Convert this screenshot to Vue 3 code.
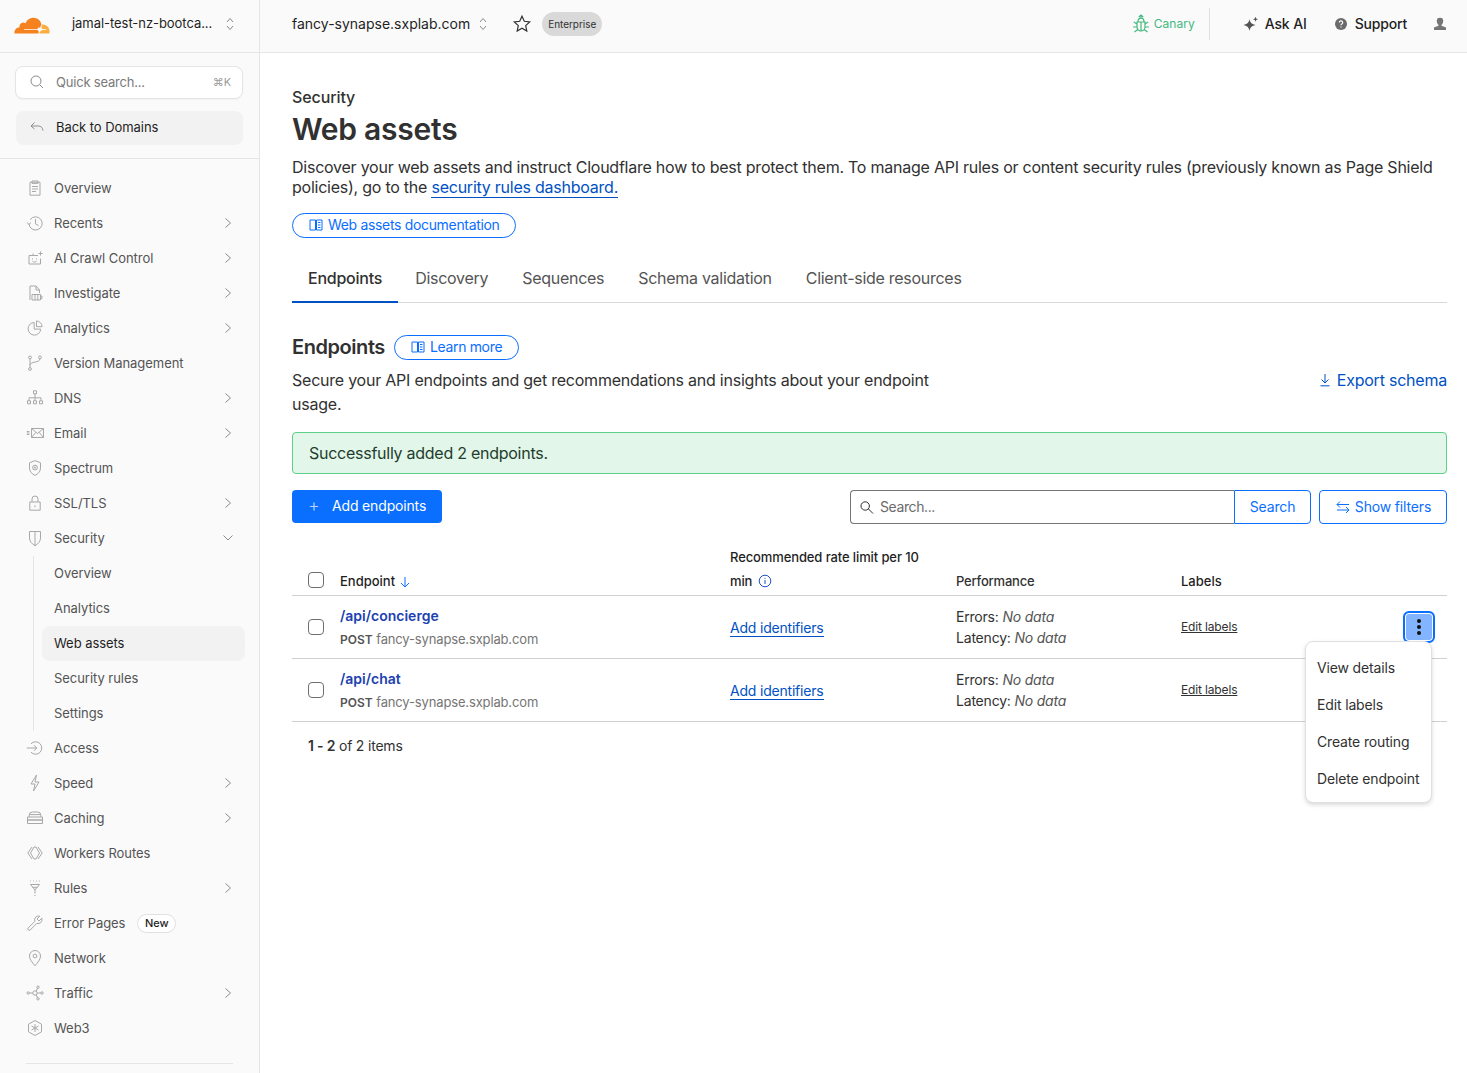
<script setup>
const ring = (cx, cy, r) => `M${cx - r} ${cy}a${r} ${r} 0 1 0 ${2 * r} 0a${r} ${r} 0 1 0 ${-2 * r} 0`
const icons = {
  overview: ['M4 3.200h10v13H4z', 'M6 2h6v2.400H6z', 'M6 7.500h6', 'M6 10h6', 'M6 12.500h4'],
  recents: ['M4.200 5.600A6.600 6.600 0 1 1 3 10', 'M1 8.600l2 1.800 2-1.800', 'M9.500 5v4.800l3 1.800'],
  ai: ['M3 6.500h9', 'M3 6.500v8.500h11.500V9.500', 'M7 6.500V4.500', 'M6.500 9.500v1', 'M10.500 9.500v1', 'M6.500 12.400c1 .8 3 .8 4 0', 'M14.500 2.500v4', 'M12.500 4.500h4'],
  investigate: ['M4 16V2h6l3.500 4v3', 'M10 2v4h3.500', 'M6 10.500h8.500V16H6z', 'M9 10.500V16', 'M11.800 10.500V16', 'M14.500 12H16v2.500h-1.500'],
  analytics: ['M8.200 3.500a6.300 6.300 0 1 0 6.500 6.600H8.200z', 'M10.500 1.900a6 6 0 0 1 5.600 5.800h-5.600z'],
  version: [ring(4, 3.4, 1.4), ring(4, 15, 1.4), ring(14, 3.4, 1.4), 'M4 4.800v8.800', 'M14 4.800c0 4.200-10 2.400-10 6.400'],
  dns: ['M7.500 1.800h3v3h-3z', 'M9 4.800v4', 'M3 8.800h12', 'M3 8.800v3', 'M9 8.800v3', 'M15 8.800v3', 'M1.500 11.800h3v3h-3z', 'M7.500 11.800h3v3h-3z', 'M13.500 11.800h3v3h-3z'],
  email: ['M5.500 4.500h12v9h-12z', 'M5.500 4.500l6 5 6-5', 'M5.500 13.500l4.400-5.200', 'M17.500 13.500l-4.400-5.200', 'M.8 7.500h2.600', 'M.8 9h2.600', 'M.8 10.500h2.600'],
  spectrum: ['M9 1.600l5.500 2.200v5.400c0 3.600-2.700 5.900-5.500 7.200-2.800-1.300-5.500-3.600-5.500-7.200V3.800z', ring(9, 8.6, 2.4), ring(9, 8.6, .7)],
  ssl: ['M3.800 8h10.400v8.200H3.800z', 'M6 8V5a3 3 0 0 1 6 0v3', 'M9 11.200v2'],
  security: ['M3.500 2.500h11V9c0 3.400-2.400 5.800-5.500 7.700C5.900 14.800 3.500 12.400 3.500 9z', 'M9 2.500v14'],
  access: ['M.8 9h10', 'M8 6.200L10.800 9 8 11.800', 'M5 4.800a6.200 6.200 0 1 1 0 8.400'],
  speed: ['M10.500 1L5 10h4l-1.500 7L13 8H9z'],
  caching: ['M3.200 8V6.200A3.200 3.200 0 0 1 6.400 3h5.200a3.200 3.200 0 0 1 3.200 3.200V8', 'M1.500 8h15v3h-15z', 'M1.500 11h15v3.500h-15z', 'M3.500 5.600h11'],
  workers: ['M6 3L1.800 9 6 15', 'M12 3l4.200 6L12 15', 'M8 3h2', 'M8 15h2', 'M8 3L4.500 9 8 15', 'M10 3l3.500 6-3.500 6'],
  rules: ['M4.500 5.500h9L9 11z', 'M9 11v3.500', 'M9 16v1', 'M4 2h.8', 'M7 2h.8', 'M10 2h.8', 'M13 2h.8', 'M6.500 8.300h5'],
  wrench: ['M15.800 4.200L13 7l-2-2 2.800-2.800a4 4 0 0 0-5 5.200L2 14.200a1.500 1.500 0 0 0 2 2l6.800-6.800a4 4 0 0 0 5-5.200z'],
  network: ['M9 16.800C6 13.200 3.500 10.400 3.500 7a5.500 5.500 0 0 1 11 0c0 3.400-2.500 6.200-5.500 9.800z', ring(9, 7, 1.9)],
  traffic: [ring(2.2, 9, 1.2), ring(12, 3.2, 1.2), ring(12, 14.8, 1.2), ring(16, 9, 1.2), ring(9, 9, 2.2), 'M3.400 9h3.400', 'M11.200 9h3.600', 'M10.200 7.300l1.200-3', 'M10.200 10.700l1.200 3'],
  web3: ['M9 1.500l6.500 3.700v7.600L9 16.500l-6.500-3.700V5.200z', 'M9 5v8', 'M5.500 7l7 4', 'M12.500 7l-7 4']
}
const nav = [
  { label: 'Overview', icon: 'overview' },
  { label: 'Recents', icon: 'recents', more: true },
  { label: 'AI Crawl Control', icon: 'ai', more: true },
  { label: 'Investigate', icon: 'investigate', more: true },
  { label: 'Analytics', icon: 'analytics', more: true },
  { label: 'Version Management', icon: 'version' },
  { label: 'DNS', icon: 'dns', more: true },
  { label: 'Email', icon: 'email', more: true },
  { label: 'Spectrum', icon: 'spectrum' },
  { label: 'SSL/TLS', icon: 'ssl', more: true },
  { label: 'Security', icon: 'security', open: true, children: ['Overview', 'Analytics', 'Web assets', 'Security rules', 'Settings'] },
  { label: 'Access', icon: 'access' },
  { label: 'Speed', icon: 'speed', more: true },
  { label: 'Caching', icon: 'caching', more: true },
  { label: 'Workers Routes', icon: 'workers' },
  { label: 'Rules', icon: 'rules', more: true },
  { label: 'Error Pages', icon: 'wrench', badge: 'New' },
  { label: 'Network', icon: 'network' },
  { label: 'Traffic', icon: 'traffic', more: true },
  { label: 'Web3', icon: 'web3' }
]
const tabs = ['Endpoints', 'Discovery', 'Sequences', 'Schema validation', 'Client-side resources']
const rows = ['/api/concierge', '/api/chat']
const menu = ['View details', 'Edit labels', 'Create routing', 'Delete endpoint']
</script>

<template>
  <div class="app">
    <aside class="side">
      <div class="brand">
        <svg class="logo" viewBox="0 5.400 24 12.300" width="36" height="18">
          <path fill="#f6821f" d="M16.509 16.845c.147-.507.091-.971-.155-1.316-.225-.316-.605-.499-1.062-.52l-8.659-.113a.156.156 0 0 1-.133-.071c-.028-.042-.035-.099-.021-.155.028-.084.112-.149.204-.157l8.736-.112c1.035-.049 2.16-.887 2.554-1.913l.499-1.302c.021-.056.029-.113.015-.168-.563-2.546-2.835-4.445-5.55-4.445-2.504 0-4.629 1.618-5.388 3.861-.493-.366-1.119-.562-1.794-.499-1.203.119-2.166 1.083-2.286 2.286-.028.31-.007.613.064.894C1.568 13.171 0 14.775 0 16.750c0 .175.014.352.035.527.014.083.084.148.169.148h15.981c.091 0 .176-.065.203-.156l.121-.424z"/>
          <path fill="#fbad41" d="M19.266 11.281c-.077 0-.161 0-.238.011-.057 0-.106.042-.127.098l-.338 1.174c-.148.507-.092.971.154 1.317.226.316.606.498 1.063.519l1.843.113c.056 0 .106.027.133.071.028.043.035.107.021.156-.028.084-.113.149-.204.155l-1.921.113c-1.041.049-2.158.886-2.553 1.914l-.14.358c-.029.071.021.142.098.142h6.598c.077 0 .147-.049.169-.126.112-.408.176-.837.176-1.281 0-2.602-2.125-4.727-4.735-4.727"/>
          <path fill="#fff" d="M16.700 12.800l.4.9.9.3-.9.3-.4.9-.4-.9-.9-.3.9-.3z"/>
        </svg>
        <span class="account">jamal-test-nz-bootca...</span>
        <svg class="updown" viewBox="0 0 10 16" width="10" height="16"><path d="M2 6l3-3.500L8 6M2 10l3 3.500L8 10"/></svg>
      </div>
      <div class="side-tools">
        <div class="quick">
          <svg viewBox="0 0 16 16" width="16" height="16"><path d="M2 7a5 5 0 1 0 10 0a5 5 0 1 0-10 0M10.800 10.800L14 14"/></svg>
          <span class="quick-text">Quick search...</span>
          <span class="kbd">⌘K</span>
        </div>
        <div class="back">
          <svg viewBox="0 0 16 16" width="16" height="16"><path d="M2 7h7.500c2.500 0 4 1.500 4.500 4.500M5.500 3.500L2 7l3.500 3"/></svg>
          <span>Back to Domains</span>
        </div>
      </div>
      <nav class="nav">
        <template v-for="n in nav" :key="n.label">
          <div class="item">
            <svg class="ico" viewBox="0 0 18 18" width="18" height="18"><path v-for="d in icons[n.icon]" :key="d" :d="d"/></svg>
            <span>{{ n.label }}</span>
            <span v-if="n.badge" class="new">{{ n.badge }}</span>
            <svg v-if="n.more" class="chev" viewBox="0 0 10 10" width="10" height="10"><path d="M2.500 .5L7.500 5l-5 4.500"/></svg>
            <svg v-if="n.open" class="chev" viewBox="0 0 10 10" width="10" height="10"><path d="M.5 2.500L5 7l4.500-4.500"/></svg>
          </div>
          <div v-if="n.children" class="sub">
            <div v-for="c in n.children" :key="c" class="subitem" :class="{ active: c === 'Web assets' }">{{ c }}</div>
          </div>
        </template>
        <div class="nav-rule"></div>
      </nav>
    </aside>

    <div class="body">
      <header class="top">
        <div class="top-left">
          <span class="domain">fancy-synapse.sxplab.com</span>
          <svg class="updown" viewBox="0 0 10 16" width="10" height="16"><path d="M2 6l3-3.500L8 6M2 10l3 3.500L8 10"/></svg>
          <svg class="star" viewBox="0 0 20 20" width="20" height="20"><path d="M10 2.300l2.300 5 5.400.6-4 3.700 1.100 5.400L10 14.300l-4.800 2.700 1.100-5.400-4-3.700 5.400-.6z"/></svg>
          <span class="plan">Enterprise</span>
        </div>
        <div class="top-right">
          <div class="canary">
            <svg viewBox="0 0 18 19" width="18" height="19"><path d="M5 8h8v5a4 4 0 0 1-8 0zM6 8c0-2.300 1.200-3.800 3-3.800S12 5.700 12 8M9 1v3.200M6.800 3L9 1l2.200 2M9 8v9M5 10L1.800 8M5 13H1M5.800 15.500L2.500 18M13 10l3.200-2M13 13h4M12.200 15.500l3.300 2.500"/></svg>
            <span>Canary</span>
          </div>
          <div class="vr"></div>
          <div class="ask">
            <svg viewBox="0 0 16 16" width="16" height="16"><path d="M6.500 3c.7 3.500 1.500 4.800 6 6-4.500 1.200-5.300 2.500-6 6-.7-3.500-1.500-4.800-6-6 4.500-1.200 5.300-2.500 6-6zM12.500 .8l.7 1.800 1.800.7-1.800.7-.7 1.800-.7-1.800-1.800-.7 1.800-.7z"/></svg>
            <span>Ask AI</span>
          </div>
          <div class="support">
            <svg viewBox="0 0 14 14" width="14" height="14"><circle cx="7" cy="7" r="6"/><path class="q" d="M5.300 5.500a1.700 1.700 0 1 1 2.500 1.500c-.5.3-.8.6-.8 1.200M7 9.500v1"/></svg>
            <span>Support</span>
          </div>
          <svg class="user" viewBox="0 0 14 14" width="14" height="14"><path d="M7 .8a3.200 3.200 0 0 1 3.200 3.400c0 1.500-.8 2.900-1.700 3.500v1l4.500 1.800V13H1v-2.500l4.500-1.800v-1C4.600 7.100 3.800 5.700 3.800 4.200A3.200 3.200 0 0 1 7 .8z"/></svg>
        </div>
      </header>

      <main class="main">
        <div class="crumb">Security</div>
        <h1>Web assets</h1>
        <p class="intro">Discover your web assets and instruct Cloudflare how to best protect them. To manage API rules or content security rules (previously known as Page Shield policies), go to the <a class="inline">security rules dashboard.</a></p>
        <a class="pill doc">
          <svg viewBox="0 0 14 14" width="14" height="14"><path d="M1 2h5.500v10H1zM7.500 2H13v10H7.500zM9 4.500h2.500M9 7h2.500M9 9.500h2.500"/></svg>
          Web assets documentation
        </a>
        <div class="tabs">
          <div v-for="(t, i) in tabs" :key="t" class="tab" :class="{ on: i === 0 }">{{ t }}</div>
        </div>
        <div class="title-row">
          <h2>Endpoints</h2>
          <a class="pill learn">
            <svg viewBox="0 0 14 14" width="14" height="14"><path d="M1 2h5.500v10H1zM7.500 2H13v10H7.500zM9 4.500h2.500M9 7h2.500M9 9.500h2.500"/></svg>
            Learn more
          </a>
        </div>
        <div class="desc-row">
          <p class="desc">Secure your API endpoints and get recommendations and insights about your endpoint usage.</p>
          <a class="export">
            <svg viewBox="0 0 14 14" width="14" height="14"><path d="M7 1v8.500M3.500 6.500L7 10l3.500-3.500M2.500 12.800h9"/></svg>
            Export schema
          </a>
        </div>
        <div class="alert">Successfully added 2 endpoints.</div>
        <div class="toolbar">
          <button class="primary"><span class="plus">+</span>Add endpoints</button>
          <div class="tools">
            <div class="searchbox">
              <svg viewBox="0 0 14 14" width="14" height="14"><path d="M1 6a4.200 4.200 0 1 0 8.400 0a4.200 4.200 0 1 0-8.400 0M8.500 9L13 13.500"/></svg>
              <input class="field" placeholder="Search..." />
            </div>
            <button class="search-btn">Search</button>
            <button class="filters">
              <svg viewBox="0 0 16 14" width="16" height="14"><path d="M2 4.500h12M5 1.500L2 4.500l3 3M14 10H2M11 7l3 3-3 3"/></svg>
              Show filters
            </button>
          </div>
        </div>

        <div class="table">
          <div class="row head">
            <div class="c-check"><span class="box"></span></div>
            <div class="c-name">Endpoint <svg class="sort" viewBox="0 0 12 12" width="12" height="12"><path d="M6 1v10M2 7l4 4 4-4"/></svg></div>
            <div class="c-rate">Recommended rate limit per 10 min <svg class="info" viewBox="0 0 14 14" width="14" height="14"><circle cx="7" cy="7" r="5.800"/><path d="M7 6v4M7 3.800v1"/></svg></div>
            <div class="c-perf">Performance</div>
            <div class="c-labels">Labels</div>
          </div>
          <div v-for="r in rows" :key="r" class="row body-row">
            <div class="c-check"><span class="box"></span></div>
            <div class="c-name">
              <div class="path">{{ r }}</div>
              <div class="host"><b>POST</b> fancy-synapse.sxplab.com</div>
            </div>
            <div class="c-rate"><a class="identifiers">Add identifiers</a></div>
            <div class="c-perf">
              <div>Errors: <i>No data</i></div>
              <div>Latency: <i>No data</i></div>
            </div>
            <div class="c-labels"><a class="edit">Edit labels</a></div>
          </div>
          <button class="kebab" aria-label="Actions"><i></i><i></i><i></i></button>
          <div class="menu">
            <div v-for="m in menu" :key="m" class="menu-item">{{ m }}</div>
          </div>
        </div>
        <div class="count"><b>1 - 2</b> of 2 items</div>
      </main>
    </div>
  </div>
</template>

<style>
html, body { margin: 0; background: #fff; }
</style>

<style scoped>
* { box-sizing: border-box; }
svg { flex: none; fill: none; stroke: currentColor; stroke-width: 1; }
.app { display: flex; width: 1467px; height: 1073px; overflow: hidden; font: 14px/20px Inter, "Liberation Sans", sans-serif; color: #313131; background: #fff; }
.side { width: 260px; flex: none; background: #fafafa; border-right: 1px solid #e5e5e5; font-size: 13px; letter-spacing: -.05px; }
.brand { height: 53px; display: flex; align-items: center; padding: 0 24px 5px 14px; border-bottom: 1px solid #e5e5e5; }
.logo { fill: none; stroke: none; margin-top: 2px; }
.account { margin-left: 22px; font-size: 13px; color: #1f1f1f; flex: 1; white-space: nowrap; padding-bottom: 1px; }
.updown { color: #8a8a8a; }
.side-tools { padding: 13px 16px 13px; border-bottom: 1px solid #e5e5e5; height: 106px; }
.quick { height: 33px; width: 228px; margin-left: -1px; background: #fff; border: 1px solid #e5e5e5; border-radius: 8px; display: flex; align-items: center; padding: 0 11px 1px 13px; color: #8c8c8c; box-shadow: 0 1px 2px rgba(0,0,0,.04); }
.quick-text { margin-left: 11px; flex: 1; color: #7a7a7a; letter-spacing: -.2px; }
.kbd { font-size: 11px; color: #9a9a9a; }
.back { margin-top: 12px; height: 34px; width: 227px; background: #f2f2f2; border-radius: 8px; display: flex; align-items: center; padding: 0 0 2px 13px; color: #1f1f1f; }
.back svg { color: #8c8c8c; margin-right: 11px; }
.nav { padding: 12px 0 0 16px; width: 245px; }
.item { height: 35px; display: flex; align-items: center; padding: 0 12px 1px 10px; color: #545454; }
.ico { color: #a8a8a8; margin-right: 10px; }
.chev { margin-left: auto; color: #8a8a8a; }
.new { margin-left: 12px; height: 19px; padding: 0 6.500px; border: 1px solid #e0e0e0; border-radius: 10px; font-size: 11px; font-weight: 500; line-height: 17px; color: #1f1f1f; background: #fff; }
.sub { margin-left: 17px; border-left: 1px solid #e5e5e5; padding-left: 8px; }
.subitem { height: 35px; line-height: 34px; padding-left: 12px; color: #545454; border-radius: 8px; }
.subitem.active { background: #f2f2f2; color: #1f1f1f; }
.nav-rule { height: 1px; background: #e5e5e5; margin: 17px 12px 0 10px; }

.body { flex: 1; min-width: 0; }
.top { height: 53px; background: #fafafa; border-bottom: 1px solid #e5e5e5; display: flex; justify-content: space-between; align-items: center; padding: 0 20px 5px 32px; }
.top-left, .top-right { display: flex; align-items: center; }
.domain { color: #1f1f1f; margin-right: 8px; }
.star { margin-left: 24px; color: #313131; stroke-width: 1.200; }
.plan { margin-left: 10px; height: 24px; line-height: 24px; padding: 0 6px; background: #d9d9d9; border-radius: 12px; font-size: 10px; color: #313131; letter-spacing: -.05px; }
.canary { display: flex; align-items: center; gap: 4px; color: #43b97f; font-size: 12px; }
.canary svg { stroke-width: 1.200; }
.vr { width: 1px; height: 32px; background: #e0e0e0; margin: 0 33px 0 14px; }
.ask { display: flex; align-items: center; gap: 6px; color: #1f1f1f; margin-right: 27px; font-weight: 500; letter-spacing: -.1px; }
.ask svg { fill: #545454; stroke: none; }
.support { display: flex; align-items: center; gap: 7px; color: #1f1f1f; margin-right: 26px; font-weight: 500; letter-spacing: -.2px; }
.support circle { fill: #6b6b6b; stroke: none; }
.support .q { stroke: #fff; stroke-width: 1.200; }
.user { fill: #757575; stroke: none; }

.main { padding: 34px 20px 0 32px; }
.crumb { font-size: 16px; font-weight: 500; color: #313131; letter-spacing: -.1px; }
h1 { margin: 2px 0 0; font-size: 30px; line-height: 40px; font-weight: 600; color: #313131; letter-spacing: -.25px; }
.intro { margin: 8px 0 0; font-size: 16px; line-height: 20px; color: #313131; width: 1155px; letter-spacing: -.24px; }
.inline { color: #0051c3; border-bottom: 1px solid #0051c3; }
.pill { display: inline-flex; align-items: center; gap: 5px; height: 25px; padding: 0 15px 1px 16px; border: 1px solid #0a6eff; border-radius: 13px; color: #0a6eff; background: #fff; letter-spacing: -.33px; }
.learn { padding-right: 16px; }
.doc { margin-top: 16px; vertical-align: top; }
.tabs { margin-top: 15px; height: 50px; display: flex; border-bottom: 1px solid #d9d9d9; }
.tab { font-size: 16px; height: 50px; line-height: 51px; padding: 0 16px; margin-right: 2px; color: #545454; letter-spacing: -.28px; }
.tab.on { color: #313131; font-weight: 500; border-bottom: 2px solid #0051c3; margin-right: 1px; letter-spacing: -.24px; }
.title-row { margin-top: 32px; display: flex; align-items: center; gap: 9px; }
h2 { margin: 0; font-size: 20px; line-height: 25px; font-weight: 600; color: #313131; letter-spacing: -.44px; }
.desc-row { margin-top: 8px; display: flex; justify-content: space-between; align-items: flex-start; }
.desc { margin: 0; width: 660px; font-size: 16px; line-height: 24px; color: #313131; letter-spacing: -.23px; }
.export { display: flex; align-items: center; gap: 5px; font-size: 16px; line-height: 24px; color: #0051c3; letter-spacing: -.22px; }
.alert { margin-top: 16px; height: 42px; line-height: 40px; padding-left: 16px; font-size: 16px; background: #e3f6ea; border: 1px solid #5dd088; border-radius: 4px; color: #1f3d2c; letter-spacing: -.26px; }
.toolbar { margin-top: 16px; height: 34px; display: flex; justify-content: space-between; }
button { font: inherit; cursor: pointer; letter-spacing: -.16px; }
.primary { height: 33px; width: 150px; background: #0a6eff; color: #fff; border: 0; border-radius: 4px; display: flex; align-items: center; padding: 0 0 1px 16px; }
.plus { font-size: 18px; font-weight: 300; width: 24px; text-align: left; color: #b8d4ff; }
.tools { display: flex; }
.searchbox { width: 384px; height: 34px; display: flex; align-items: center; gap: 6px; padding-left: 9px; border: 1px solid #757575; border-right: 0; border-radius: 4px 0 0 4px; background: #fff; color: #313131; }
.field { flex: 1; border: 0; outline: 0; padding: 0; font: inherit; color: #313131; background: transparent; letter-spacing: -.4px; }
.field::placeholder { color: #6b6b6b; opacity: 1; }
.search-btn { width: 77px; height: 34px; padding-bottom: 1px; background: #fff; border: 1px solid #0a6eff; border-radius: 0 4px 4px 0; color: #0a6eff; }
.filters { margin-left: 8px; width: 128px; height: 34px; padding-bottom: 1px; background: #fff; border: 1px solid #0a6eff; border-radius: 4px; color: #0a6eff; display: flex; align-items: center; justify-content: center; gap: 4px; }
.table { position: relative; margin-top: 21px; }
.row { display: grid; grid-template-columns: 48px 390px 226px 225px 1fr; border-bottom: 1px solid #d0d0d0; }
.head { height: 51px; align-items: end; padding-bottom: 2px; font-size: 13px; font-weight: 500; color: #1f1f1f; line-height: 24px; }
.head .c-rate { padding-right: 20px; letter-spacing: -.11px; }
.head .c-perf { line-height: 24px; }
.head .c-check { align-self: end; height: 24px; margin-bottom: 1px; }
.sort { color: #0a6eff; vertical-align: -2px; }
.info { color: #2050c8; vertical-align: -2px; margin-left: 2px; }
.body-row { height: 63px; align-items: center; }
.c-check { padding-left: 16px; display: flex; align-items: center; }
.box { width: 16px; height: 16px; border: 1px solid #6f6f6f; border-radius: 4px; background: #fff; }
.path { font-weight: 600; color: #2041b0; line-height: 22px; padding-top: 2px; box-sizing: content-box; }
.host { margin-top: 1px; line-height: 22px; color: #757575; font-size: 13px; letter-spacing: -.15px; }
.host b { font-weight: 600; color: #545454; font-size: 12px; letter-spacing: 0; }
.identifiers { color: #0051c3; border-bottom: 1px solid #0051c3; letter-spacing: -.2px; position: relative; top: 1px; }
.c-perf { line-height: 21px; color: #313131; letter-spacing: -.2px; }
.c-perf i { color: #545454; }
.edit { font-size: 12px; text-decoration: underline; color: #313131; letter-spacing: -.15px; position: relative; top: -1px; }
.kebab { position: absolute; left: 1111px; top: 66px; width: 32px; height: 32px; padding: 0; background: #82b4ff; border: 2px solid #0a6eff; border-radius: 6px; display: flex; flex-direction: column; align-items: center; justify-content: center; gap: 2px; box-shadow: inset 0 0 0 1px #fff; }
.kebab i { width: 4px; height: 4px; border-radius: 50%; background: #111; }
.menu { position: absolute; left: 1013px; top: 96px; width: 127px; height: 162px; padding: 7px 0; background: #fff; border: 1px solid #e0e0e0; border-radius: 8px; box-shadow: 0 2px 4px rgba(0,0,0,.15); }
.menu-item { height: 37px; line-height: 37px; padding-left: 11px; white-space: nowrap; color: #313131; letter-spacing: -.15px; }
.count { margin-top: 14px; padding-left: 16px; letter-spacing: -.2px; }
.count b { font-weight: 600; }
</style>
